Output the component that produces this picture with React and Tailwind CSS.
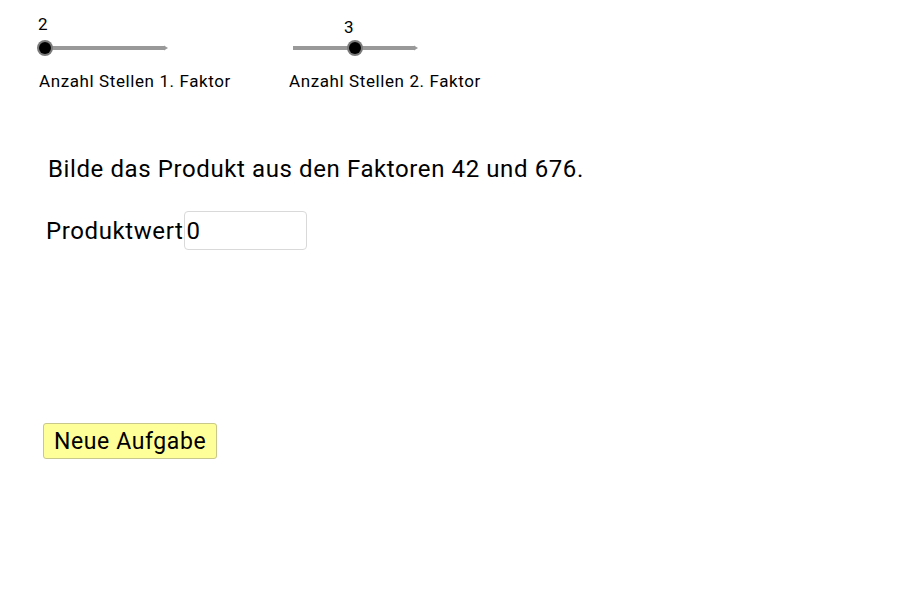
import React from "react";

function Slider({ width, knob }) {
  return (
    <svg width={width + 12} height="20" viewBox={`0 0 ${width + 12} 20`} className="block">
      <line x1="3" y1="10" x2={width + 3} y2="10" stroke="#999999" strokeWidth="4" />
      <polygon points={`${width + 2},7.5 ${width + 6},10 ${width + 2},12.5`} fill="#999999" />
      <circle cx={knob} cy="10" r="8" fill="#7a7a7a" />
      <circle cx={knob} cy="10" r="6" fill="#000000" />
    </svg>
  );
}

export default function App() {
  return (
    <div className="w-[900px] h-[600px] bg-white text-black font-['Roboto',sans-serif] tracking-[0.6px] overflow-hidden">
      <div className="flex items-start h-[140px]">
        <div className="ml-[37px] w-[250px]">
          <div className="mt-[14px] h-[20px] pl-[1px] text-[17px] leading-[20px]">2</div>
          <div className="mt-[4px]">
            <Slider width={125} knob={8} />
          </div>
          <div className="mt-[13px] pl-[2px] text-[17px] leading-[20px]">Anzahl Stellen 1. Faktor</div>
        </div>
        <div className="ml-[2px]">
          <div className="mt-[17px] h-[20px] pl-[55px] text-[17px] leading-[20px]">3</div>
          <div className="mt-[1px] ml-[1px]">
            <Slider width={122} knob={65} />
          </div>
          <div className="mt-[13px] text-[17px] leading-[20px]">Anzahl Stellen 2. Faktor</div>
        </div>
      </div>
      <div className="mt-[15px] ml-[48px] text-[24px] leading-[28px]">
        Bilde das Produkt aus den Faktoren 42 und 676.
      </div>
      <div className="mt-[28px] ml-[46px] flex items-center">
        <span className="text-[24px] leading-[28px]">Produktwert</span>
        <div className="ml-[1px] w-[123px] h-[39px] border border-[#d9d9d9] rounded-[4px] flex items-center pl-[1px] text-[24px]">
          0
        </div>
      </div>
      <div className="mt-[173px] ml-[43px]">
        <button className="h-[36px] px-[10px] bg-[#ffff99] border border-[#c8c88c] rounded-[3px] text-[23px] leading-[33px] tracking-[0.6px] text-black">
          Neue Aufgabe
        </button>
      </div>
    </div>
  );
}
